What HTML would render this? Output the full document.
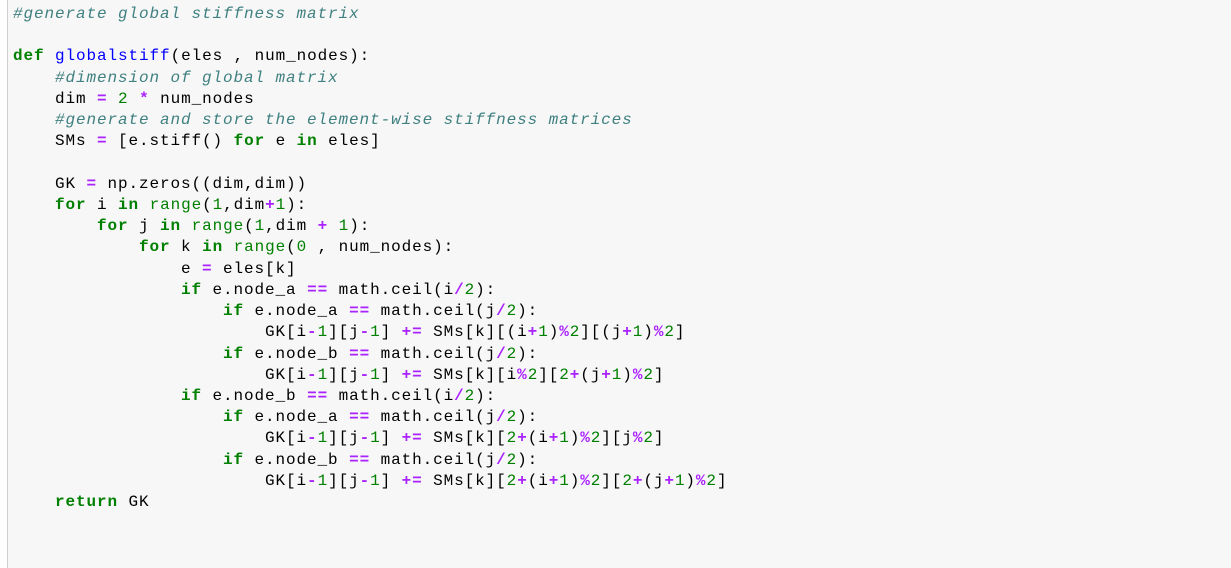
<!DOCTYPE html>
<html><head><meta charset="utf-8"><style>
html,body{margin:0;padding:0;background:#fff;width:1231px;height:560px;overflow:hidden}
.box{position:absolute;left:7px;top:-2px;width:1230px;height:570px;background:#f7f7f7;border-left:1px solid #cfcfcf}
pre{position:absolute;left:13px;top:4px;margin:0;font-family:"Liberation Mono",monospace;font-size:16px;letter-spacing:0.9px;line-height:21.22px;color:#000}
.c{color:#408080;font-style:italic}
.k{color:#008000;font-weight:bold}
.f{color:#0000ff}
.o{color:#aa22ff;font-weight:bold}
.n{color:#008000}
</style></head><body>
<div class="box"></div>
<pre><span class="c">#generate global stiffness matrix</span>

<span class="k">def</span> <span class="f">globalstiff</span>(eles , num_nodes):
    <span class="c">#dimension of global matrix</span>
    dim <span class="o">=</span> <span class="n">2</span> <span class="o">*</span> num_nodes
    <span class="c">#generate and store the element-wise stiffness matrices</span>
    SMs <span class="o">=</span> [e.stiff() <span class="k">for</span> e <span class="k">in</span> eles]

    GK <span class="o">=</span> np.zeros((dim,dim))
    <span class="k">for</span> i <span class="k">in</span> <span class="n">range</span>(<span class="n">1</span>,dim<span class="o">+</span><span class="n">1</span>):
        <span class="k">for</span> j <span class="k">in</span> <span class="n">range</span>(<span class="n">1</span>,dim <span class="o">+</span> <span class="n">1</span>):
            <span class="k">for</span> k <span class="k">in</span> <span class="n">range</span>(<span class="n">0</span> , num_nodes):
                e <span class="o">=</span> eles[k]
                <span class="k">if</span> e.node_a <span class="o">==</span> math.ceil(i<span class="o">/</span><span class="n">2</span>):
                    <span class="k">if</span> e.node_a <span class="o">==</span> math.ceil(j<span class="o">/</span><span class="n">2</span>):
                        GK[i<span class="o">-</span><span class="n">1</span>][j<span class="o">-</span><span class="n">1</span>] <span class="o">+=</span> SMs[k][(i<span class="o">+</span><span class="n">1</span>)<span class="o">%</span><span class="n">2</span>][(j<span class="o">+</span><span class="n">1</span>)<span class="o">%</span><span class="n">2</span>]
                    <span class="k">if</span> e.node_b <span class="o">==</span> math.ceil(j<span class="o">/</span><span class="n">2</span>):
                        GK[i<span class="o">-</span><span class="n">1</span>][j<span class="o">-</span><span class="n">1</span>] <span class="o">+=</span> SMs[k][i<span class="o">%</span><span class="n">2</span>][<span class="n">2</span><span class="o">+</span>(j<span class="o">+</span><span class="n">1</span>)<span class="o">%</span><span class="n">2</span>]
                <span class="k">if</span> e.node_b <span class="o">==</span> math.ceil(i<span class="o">/</span><span class="n">2</span>):
                    <span class="k">if</span> e.node_a <span class="o">==</span> math.ceil(j<span class="o">/</span><span class="n">2</span>):
                        GK[i<span class="o">-</span><span class="n">1</span>][j<span class="o">-</span><span class="n">1</span>] <span class="o">+=</span> SMs[k][<span class="n">2</span><span class="o">+</span>(i<span class="o">+</span><span class="n">1</span>)<span class="o">%</span><span class="n">2</span>][j<span class="o">%</span><span class="n">2</span>]
                    <span class="k">if</span> e.node_b <span class="o">==</span> math.ceil(j<span class="o">/</span><span class="n">2</span>):
                        GK[i<span class="o">-</span><span class="n">1</span>][j<span class="o">-</span><span class="n">1</span>] <span class="o">+=</span> SMs[k][<span class="n">2</span><span class="o">+</span>(i<span class="o">+</span><span class="n">1</span>)<span class="o">%</span><span class="n">2</span>][<span class="n">2</span><span class="o">+</span>(j<span class="o">+</span><span class="n">1</span>)<span class="o">%</span><span class="n">2</span>]
    <span class="k">return</span> GK
</pre>
</body></html>
